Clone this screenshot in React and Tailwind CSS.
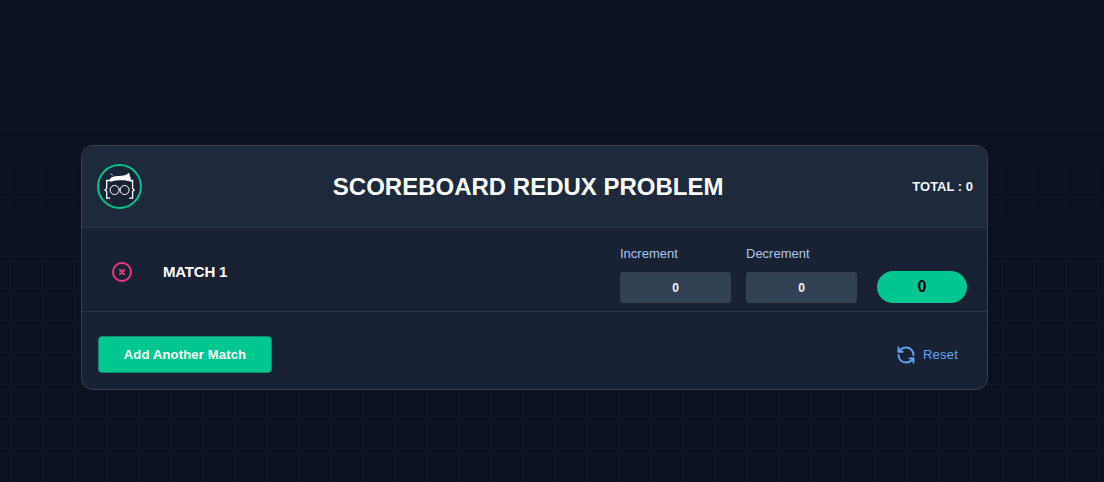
import React from "react";
import { LuRefreshCcw } from "react-icons/lu";

function Logo() {
  return (
    <svg viewBox="0 0 45 45" className="w-[45px] h-[45px] shrink-0">
      <circle cx="22.5" cy="22.5" r="21.4" fill="#1a2235" stroke="#00c78f" strokeWidth="2" />
      <path d="M12.5 16.5 C13 13 17 12 22 12 C26.5 12 29.5 11 32 8.7 L33.3 13 L34.8 17.8 C30 16 20 15.5 14 17.8 Z" fill="#fff" />
      <path d="M14 9.5 L15.5 11.5" stroke="#fff" strokeWidth="0.8" />
      <path d="M14 16.5 H9.7 V24.5 L8 26 L9.7 27.5 V34.2 H13.2 M32 16.5 H35.6 V24.5 L37.2 26 L35.6 27.5 V34.2 H32.2" fill="none" stroke="#fff" strokeWidth="1.3" />
      <circle cx="17.6" cy="26" r="4.5" fill="none" stroke="#fff" strokeWidth="1" />
      <circle cx="27.6" cy="26" r="4.5" fill="none" stroke="#fff" strokeWidth="1" />
      <path d="M22 25.5 H23.2" stroke="#fff" strokeWidth="1" />
    </svg>
  );
}

function XCircle() {
  return (
    <svg viewBox="0 0 24 24" className="w-6 h-6 mt-[4px]" fill="none" stroke="#ec3a78" strokeWidth="2" strokeLinecap="round">
      <circle cx="12" cy="12" r="9" />
      <path d="M10 10 L14 14 M14 10 L10 14" strokeWidth="2.2" />
    </svg>
  );
}

function NumberBox({ label }) {
  return (
    <div className="flex flex-col w-[111px]">
      <label className="text-[13px] leading-4 text-[#b0c6ec] mb-[10px] -mt-px">{label}</label>
      <div className="h-[31px] pt-px rounded-[3px] bg-[#334155] border border-[#374151] flex items-center justify-center text-[12px] font-bold text-[#f1f5f9]">0</div>
    </div>
  );
}

export default function App() {
  return (
    <div
      className="w-full h-[482px] overflow-hidden flex items-start font-['Liberation_Sans',Arial,sans-serif] bg-[#0b1120]"
      style={{
        backgroundImage:
          "linear-gradient(to bottom, #0b1120 15%, rgba(11,17,32,0) 65%), linear-gradient(rgba(255,255,255,0.03) 1px, transparent 1px), linear-gradient(90deg, rgba(255,255,255,0.03) 1px, transparent 1px)",
        backgroundSize: "100% 100%, 32px 32px, 32px 32px",
        backgroundPosition: "0 0, 0 0, 10px 0",
      }}
    >
      <div className="ml-[81px] mt-[145px] w-[907px] h-[245px] rounded-[12px] border border-[#374151] bg-[#192235] overflow-hidden flex flex-col">
        <header className="h-[82px] shrink-0 bg-[#1e293b] border-b border-[#2d3748] flex items-center pl-[15px] pr-[14px]">
          <Logo />
          <h1 className="flex-1 text-center text-[24px] font-bold text-white pl-[2px]">SCOREBOARD REDUX PROBLEM</h1>
          <span className="text-[13px] font-bold text-[#f1f5f9]">TOTAL : 0</span>
        </header>
        <section className="h-[84px] shrink-0 border-b border-[#2d3748] flex items-center pl-[28px] pr-5">
          <XCircle />
          <span className="ml-[29px] mt-[6px] text-[15px] tracking-[-0.2px] font-bold text-white">MATCH 1</span>
          <div className="ml-auto flex items-end gap-[15px] h-[58px] mt-[8px]">
            <NumberBox label="Increment" />
            <NumberBox label="Decrement" />
            <div className="ml-[5px] w-[90px] h-8 rounded-full bg-[#00c78f] flex items-center justify-center text-[16px] font-bold text-black">0</div>
          </div>
        </section>
        <footer className="flex-1 flex items-center justify-between pl-[16px] pr-[29px] pt-2">
          <button className="w-[174px] h-[37px] rounded-[4px] bg-[#00c78f] border border-[#0a8f6c] text-[13px] tracking-[0.18px] font-bold text-white">Add Another Match</button>
          <button className="flex items-center gap-[7px] text-[13px] tracking-[0.2px] text-[#60a5fa]">
            <LuRefreshCcw className="w-5 h-5" strokeWidth={2.3} />
            Reset
          </button>
        </footer>
      </div>
    </div>
  );
}
